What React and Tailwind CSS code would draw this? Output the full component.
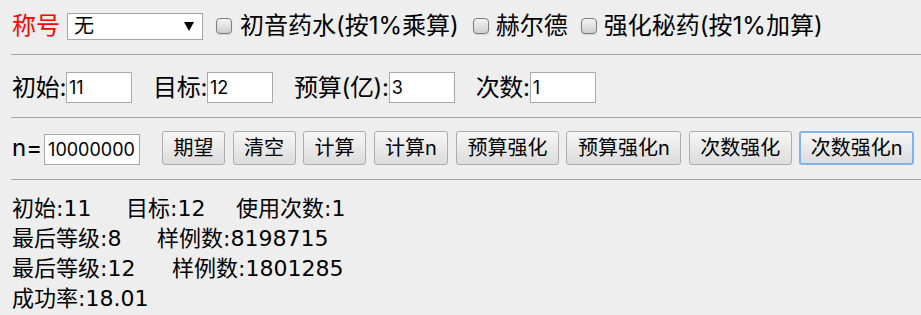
import React from "react";

const font = { fontFamily: 'Inter, "Noto Sans CJK SC", sans-serif' };
const resFont = { fontFamily: '"DejaVu Sans", "Noto Sans CJK SC", sans-serif' };

function Checkbox() {
  return (
    <span className="shrink-0 block w-[16px] min-w-[16px] h-[16px] rounded-[4px] border border-[#7c7c7c] bg-gradient-to-b from-[#f4f4f4] to-[#cfcfcf] shadow-[0_1px_1px_rgba(0,0,0,0.12)]" />
  );
}

function Btn({ children, active }) {
  return (
    <button
      className={
        "shrink-0 whitespace-nowrap h-[34px] rounded-[3px] text-[20px] leading-none text-black bg-gradient-to-b from-[#f6f6f6] to-[#dcdcdc] " +
        (active ? "border-2 border-[#80b3ee] px-[9.5px]" : "border border-[#adadad] px-[10.5px]")
      }
      style={font}
    >
      {children}
    </button>
  );
}

function Field({ label, value, first }) {
  return (
    <div className={"flex items-center shrink-0 " + (first ? "" : "ml-[21px]")}>
      <span className="text-[24px] leading-none text-black whitespace-nowrap tracking-[-0.3px]">{label}</span>
      <input
        readOnly
        value={value}
        className="w-[66px] h-[31px] border border-[#a9a9a9] bg-white px-[2px] text-[18px] text-black outline-none"
        style={font}
      />
    </div>
  );
}

function Hr() {
  return <div className="h-0 border-t border-[#a3a3a3]" />;
}

export default function App() {
  return (
    <div className="min-h-[315px] bg-[#eeeeee] pl-[11px] overflow-hidden" style={font}>
      <div className="pt-[13px] flex items-center h-[39px] whitespace-nowrap">
        <span className="text-[24px] leading-none text-[#ff0000] pl-[1px]">称号</span>
        <div className="shrink-0 ml-[7px] w-[136px] h-[27px] bg-white border border-[#a6a6a6] flex items-center justify-between pl-[6px] pr-[8px]">
          <span className="text-[20px] leading-none text-black">无</span>
          <svg width="10" height="9" viewBox="0 0 10 9">
            <path d="M0 0 H10 L5 9 Z" fill="#000" />
          </svg>
        </div>
        <span className="ml-[13px] flex items-center"><Checkbox /></span>
        <span className="ml-[8px] text-[24px] leading-none text-black">初音药水(按1%乘算)</span>
        <span className="ml-[14px] flex items-center"><Checkbox /></span>
        <span className="ml-[7px] text-[24px] leading-none text-black">赫尔德</span>
        <span className="ml-[13px] flex items-center"><Checkbox /></span>
        <span className="ml-[7px] text-[24px] leading-none text-black">强化秘药(按1%加算)</span>
      </div>
      <div className="mt-[15px]"><Hr /></div>
      <div className="mt-[17px] flex items-center h-[31px] pl-[1px]">
        <Field label="初始:" value="11" first />
        <Field label="目标:" value="12" />
        <Field label="预算(亿):" value="3" />
        <Field label="次数:" value="1" />
      </div>
      <div className="mt-[14px]"><Hr /></div>
      <div className="mt-[13px] flex items-center h-[34px] pl-[1px]">
        <span className="text-[24px] leading-none text-black whitespace-nowrap">n=</span>
        <input
          readOnly
          value="10000000"
          className="shrink-0 ml-[2px] mt-[3px] w-[96px] h-[31px] border border-[#a9a9a9] bg-white px-[3px] text-[18px] text-black outline-none"
          style={font}
        />
        <div className="ml-[22px] flex items-center gap-[7.5px]">
          <Btn>期望</Btn>
          <Btn>清空</Btn>
          <Btn>计算</Btn>
          <Btn>计算n</Btn>
          <Btn>预算强化</Btn>
          <Btn>预算强化n</Btn>
          <Btn>次数强化</Btn>
          <Btn active>次数强化n</Btn>
        </div>
      </div>
      <div className="mt-[14px]"><Hr /></div>
      <div className="mt-[14px] text-[22px] leading-[30px] text-black pl-[1px] whitespace-nowrap" style={resFont}>
        <div>
          <span className="inline-block w-[114px]">初始:11</span>
          <span className="inline-block w-[110px]">目标:12</span>
          <span>使用次数:1</span>
        </div>
        <div>
          <span className="inline-block w-[145px]">最后等级:8</span>
          <span>样例数:8198715</span>
        </div>
        <div>
          <span className="inline-block w-[160px]">最后等级:12</span>
          <span>样例数:1801285</span>
        </div>
        <div>成功率:18.01</div>
      </div>
    </div>
  );
}
